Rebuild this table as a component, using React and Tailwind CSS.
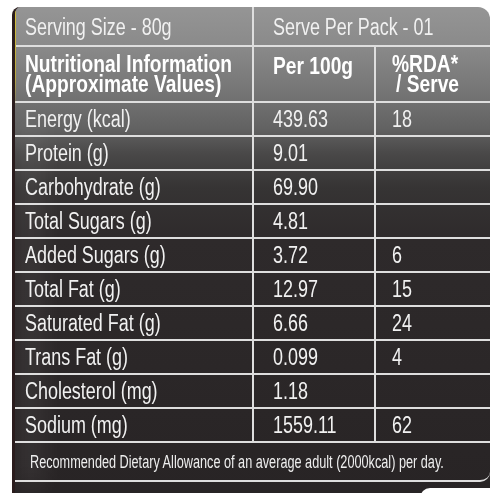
import React from 'react'

const rows = [
  ['Energy (kcal)', '439.63', '18'],
  ['Protein (g)', '9.01', ''],
  ['Carbohydrate (g)', '69.90', ''],
  ['Total Sugars (g)', '4.81', ''],
  ['Added Sugars (g)', '3.72', '6'],
  ['Total Fat (g)', '12.97', '15'],
  ['Saturated Fat (g)', '6.66', '24'],
  ['Trans Fat (g)', '0.099', '4'],
  ['Cholesterol (mg)', '1.18', ''],
  ['Sodium (mg)', '1559.11', '62'],
]

function T({children, bold, small}){
  let cls = 'scale-x-[0.78] text-[#f1f1f1]'
  if (bold) cls = 'scale-x-[0.8] font-bold text-white'
  if (small) cls = 'scale-x-[0.705] text-[#eeeeee]'
  return (
    <span className={`inline-block origin-left whitespace-nowrap ${cls}`}>
      {children}
    </span>
  )
}

export default function App(){
  return (
    <div className="w-[500px] h-[500px] bg-white relative overflow-hidden pt-[7px] pl-[12px] pr-[10px]" style={{fontFamily:'"Liberation Sans", Arial, sans-serif'}}>
      <div className="relative h-[486px] rounded-tl-[8px] rounded-tr-[12px] overflow-hidden bg-[linear-gradient(to_bottom,#959595_0%,#8a8a8a_8%,#767676_17%,#626262_25%,#4a4949_30%,#363434_37%,#2e2a2b_48%,#282425_100%)] border-l-[3px] border-[#2a1c1d] text-[23px] leading-none">
        {/* serving row */}
        <div className="flex h-[40px] border-b-2 border-[#dedede]">
          <div className="w-[239px] pl-[10px] pt-[3px] flex items-center border-r-2 border-[#dedede]"><T>Serving Size - 80g</T></div>
          <div className="flex-1 pl-[19px] pt-[3px] flex items-center"><T>Serve Per Pack - 01</T></div>
        </div>
        {/* header row */}
        <div className="flex h-[56px] border-b-2 border-[#dedede]">
          <div className="w-[239px] pl-[10px] flex flex-col justify-center text-[24px] leading-[20px] border-r-2 border-[#dedede]">
            <T bold>Nutritional Information</T>
            <T bold>(Approximate Values)</T>
          </div>
          <div className="w-[122px] pl-[19px] pt-[7px] text-[24px] border-r-2 border-[#dedede]"><T bold>Per 100g</T></div>
          <div className="flex-1 pl-[16px] flex flex-col justify-center text-[24px] leading-[20px]">
            <T bold>%RDA*</T>
            <span className="pl-[4px]"><T bold>/ Serve</T></span>
          </div>
        </div>
        {rows.map(([name, val, rda]) => (
          <div key={name} className="flex h-[34px] border-b-2 border-[#dedede]">
            <div className="w-[239px] pl-[10px] flex items-center border-r-2 border-[#dedede]"><T>{name}</T></div>
            <div className="w-[122px] pl-[19px] flex items-center border-r-2 border-[#dedede]"><T>{val}</T></div>
            <div className="flex-1 pl-[16px] flex items-center"><T>{rda}</T></div>
          </div>
        ))}
        {/* footnote */}
        <div className="h-[39px] border-b-2 border-[#dedede] rounded-br-[10px] pl-[15px] flex items-center text-[18px]">
          <T small>Recommended Dietary Allowance of an average adult (2000kcal) per day.</T>
        </div>
        {/* yellow edge + glow */}
        <div className="absolute left-[-3px] top-0 w-[4px] h-[100px] bg-[linear-gradient(to_bottom,#d8c23a,#b9a640_70%,transparent)]" />
        <div className="absolute left-[8px] top-[120px] w-[16px] h-[360px] bg-white/10 blur-md pointer-events-none" />
      </div>
      <div className="absolute right-0 bottom-0 w-[80px] h-[12px] bg-white rounded-tl-[10px]" />
    </div>
  )
}
